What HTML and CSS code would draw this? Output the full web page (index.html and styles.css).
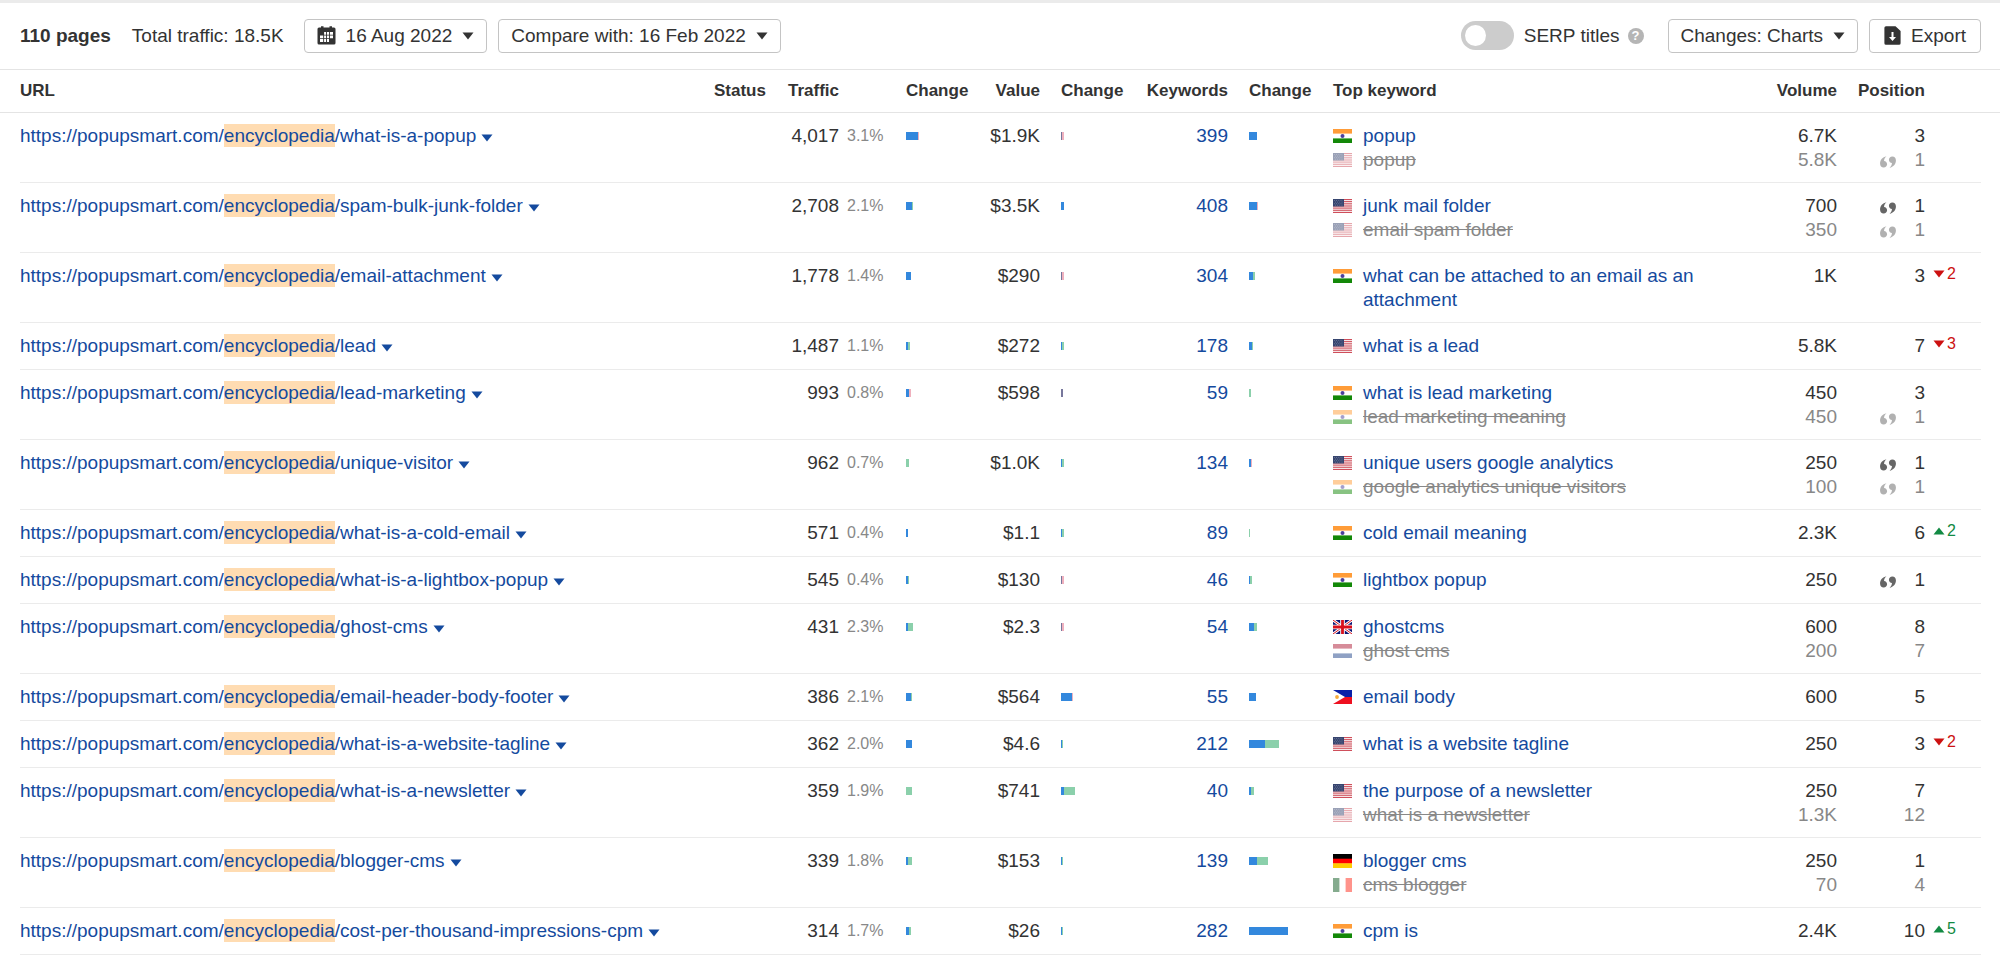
FILE: index.html
```html
<!DOCTYPE html>
<html lang="en">
<head>
<meta charset="utf-8">
<title>Top pages</title>
<link rel="stylesheet" href="styles.css">
</head>
<body>
<svg class="sprite" aria-hidden="true">
  <symbol id="in" viewBox="0 0 19 14"><path fill="#fff" d="M0 0h19v14H0z"/><path fill="#ff9c38" d="M0 0h19v4.6H0z"/><path fill="#138808" d="M0 9.4h19V14H0z"/><circle cx="9.5" cy="7" r="2" fill="#4a3f9c"/></symbol>
  <symbol id="us" viewBox="0 0 19 14"><path fill="#f6e4e6" d="M0 0h19v14H0z"/><path stroke="#cf4f5b" d="M0 .5h19M0 2.6h19M0 4.8h19M0 7h19M0 9.1h19M0 11.3h19M0 13.5h19"/><path fill="#37456f" d="M0 0h11v7.5H0z"/><path stroke="#8590ad" stroke-width=".7" stroke-dasharray=".8 1.4" d="M1 1.5h9M2 3.1h8M1 4.7h9M2 6.2h8"/></symbol>
  <symbol id="gb" viewBox="0 0 19 14"><path fill="#0a1473" d="M0 0h19v14H0z"/><path stroke="#fff" stroke-width="2.8" d="M0 0l19 14M19 0L0 14"/><path stroke="#d8101c" stroke-width="1" d="M0 0l19 14M19 0L0 14"/><path stroke="#fff" stroke-width="4.6" d="M9.5 0v14M0 7h19"/><path stroke="#d8101c" stroke-width="2.8" d="M9.5 0v14M0 7h19"/></symbol>
  <symbol id="nl" viewBox="0 0 19 14"><path fill="#fff" d="M0 0h19v14H0z"/><path fill="#ae1c36" d="M0 0h19v4.6H0z"/><path fill="#21468b" d="M0 9.4h19V14H0z"/></symbol>
  <symbol id="ph" viewBox="0 0 19 14"><path fill="#0a20a8" d="M0 0h19v7H0z"/><path fill="#ee1020" d="M0 7h19v7H0z"/><path fill="#fff" d="M0 0l12 7L0 14z"/><circle cx="4" cy="7" r="1.9" fill="#f7ac3c"/></symbol>
  <symbol id="de" viewBox="0 0 19 14"><path d="M0 0h19v5H0z"/><path fill="#f00" d="M0 4.7h19v5H0z"/><path fill="#fc0" d="M0 9.3h19V14H0z"/></symbol>
  <symbol id="it" viewBox="0 0 19 14"><path fill="#fff" d="M0 0h19v14H0z"/><path fill="#0e5a20" d="M0 0h6.4v14H0z"/><path fill="#ff2a1a" d="M12.6 0H19v14h-6.4z"/></symbol>
  <symbol id="dn" viewBox="0 0 12 8"><path fill="currentColor" d="M.5.5h11L6 7.5z"/></symbol>
  <symbol id="up" viewBox="0 0 12 8"><path fill="currentColor" d="M.5 7.500h11L6 .5z"/></symbol>
  <symbol id="quote" viewBox="0 0 18 13"><path fill="currentColor" d="M7.300.3C3.200 1.200.4 4.300.4 8.200c0 2.600 1.600 4.300 3.900 4.300 2.100 0 3.700-1.500 3.700-3.500 0-2.100-1.400-3.500-3.300-3.500C4.900 3.300 5.700 1.600 7.300.3z"/><path fill="currentColor" d="M10.700 12.700c4.100-.9 6.900-4 6.900-7.900C17.600 2.200 16 .5 13.700.5 11.600.5 10 2 10 4c0 2.100 1.400 3.500 3.300 3.500-.2 2.200-1 3.900-2.600 5.200z"/></symbol>
</svg>

<header class="toolbar">
  <strong class="count">110 pages</strong>
  <span class="total">Total traffic: 18.5K</span>
  <button class="btn date" type="button">
    <svg class="cal" viewBox="0 0 19 19" aria-hidden="true"><path fill="#333" d="M3 1.500h1V.3h2.500v1.200h6V.3H15v1.200h2A1.500 1.500 0 0 1 18.500 3v14a1.500 1.500 0 0 1-1.500 1.500H2A1.500 1.500 0 0 1 .5 17V3A1.500 1.500 0 0 1 2 1.500z"/><path fill="#fff" d="M3 6h13v10H3z"/><path fill="#333" d="M6.200 6h.9v10h-.9zM9.100 6h.9v10h-.9zM12 6h.9v10H12zM3 8.700h13v.9H3zM3 12.200h13v.9H3zM3 6h3.200v2.700H3zM12.900 13.100H16V16h-3.100z"/></svg>
    <span>16 Aug 2022</span><svg class="caret" aria-hidden="true"><use href="#dn"/></svg>
  </button>
  <button class="btn" type="button"><span>Compare with: 16 Feb 2022</span><svg class="caret" aria-hidden="true"><use href="#dn"/></svg></button>
  <div class="tools">
    <label class="switch"><input type="checkbox" role="switch"><span>SERP titles</span></label>
    <button class="help" type="button" aria-label="Help">?</button>
    <button class="btn" type="button"><span>Changes: Charts</span><svg class="caret" aria-hidden="true"><use href="#dn"/></svg></button>
    <button class="btn export" type="button">
      <svg class="file" viewBox="0 0 17 19" aria-hidden="true"><path fill="#333" d="M2 .2h9.500L16.600 5v12.200a1.600 1.600 0 0 1-1.600 1.600H2A1.600 1.600 0 0 1 .4 17.200V1.800A1.600 1.600 0 0 1 2 .2z"/><path fill="#fff" d="M7.500 6h2v5H12l-3.500 4L5 11h2.500z"/></svg>
      <span>Export</span>
    </button>
  </div>
</header>

<table class="pages">
  <colgroup><col><col class="c-status"><col class="c-traffic"><col class="c-share"><col class="c-change"><col class="c-value"><col class="c-change2"><col class="c-kw"><col class="c-change2"><col class="c-top"><col class="c-volume"><col class="c-pos"><col class="c-delta"></colgroup>
  <thead>
    <tr><th>URL</th><th>Status</th><th class="num">Traffic</th><th></th><th>Change</th><th class="num">Value</th><th class="gap">Change</th><th class="num">Keywords</th><th class="gap">Change</th><th>Top keyword</th><th class="num">Volume</th><th class="num">Position</th><th></th></tr>
  </thead>
  <tbody>
    <tr>
      <td><a href="#">https://popupsmart.com/<mark>encyclopedia</mark>/what-is-a-popup<svg><use href="#dn"/></svg></a></td><td></td>
      <td class="num">4,017</td><td class="share">3.1%</td><td><div class="bar"><i style="width:12px"></i><i class="lost" style="width:1px"></i></div></td>
      <td class="num">$1.9K</td><td class="gap"><div class="bar"><i class="dim" style="width:1px"></i><i class="lost" style="width:2px"></i></div></td>
      <td class="num"><a href="#">399</a></td><td class="gap"><div class="bar"><i style="width:8px"></i></div></td>
      <td><div class="key"><svg><use href="#in"/></svg><a href="#">popup</a></div><div class="key old"><svg><use href="#us"/></svg><s>popup</s></div></td>
      <td class="num">6.7K<div class="old">5.8K</div></td>
      <td class="num">3<div class="old"><svg class="quote"><use href="#quote"/></svg>1</div></td><td></td>
    </tr>
    <tr>
      <td><a href="#">https://popupsmart.com/<mark>encyclopedia</mark>/spam-bulk-junk-folder<svg><use href="#dn"/></svg></a></td><td></td>
      <td class="num">2,708</td><td class="share">2.1%</td><td><div class="bar"><i style="width:6px"></i><i class="gain" style="width:1px"></i></div></td>
      <td class="num">$3.5K</td><td class="gap"><div class="bar"><i style="width:3px"></i></div></td>
      <td class="num"><a href="#">408</a></td><td class="gap"><div class="bar"><i style="width:8px"></i><i class="lost" style="width:1px"></i></div></td>
      <td><div class="key"><svg><use href="#us"/></svg><a href="#">junk mail folder</a></div><div class="key old"><svg><use href="#us"/></svg><s>email spam folder</s></div></td>
      <td class="num">700<div class="old">350</div></td>
      <td class="num"><svg class="quote"><use href="#quote"/></svg>1<div class="old"><svg class="quote"><use href="#quote"/></svg>1</div></td><td></td>
    </tr>
    <tr>
      <td><a href="#">https://popupsmart.com/<mark>encyclopedia</mark>/email-attachment<svg><use href="#dn"/></svg></a></td><td></td>
      <td class="num">1,778</td><td class="share">1.4%</td><td><div class="bar"><i style="width:5px"></i></div></td>
      <td class="num">$290</td><td class="gap"><div class="bar"><i class="dim" style="width:1px"></i><i class="lost" style="width:2px"></i></div></td>
      <td class="num"><a href="#">304</a></td><td class="gap"><div class="bar"><i style="width:4px"></i><i class="gain" style="width:2px"></i></div></td>
      <td><div class="key"><svg><use href="#in"/></svg><a href="#">what can be attached to an email as an attachment</a></div></td>
      <td class="num">1K</td>
      <td class="num">3</td><td><div class="delta down"><svg><use href="#dn"/></svg>2</div></td>
    </tr>
    <tr>
      <td><a href="#">https://popupsmart.com/<mark>encyclopedia</mark>/lead<svg><use href="#dn"/></svg></a></td><td></td>
      <td class="num">1,487</td><td class="share">1.1%</td><td><div class="bar"><i style="width:2px"></i><i class="gain" style="width:2px"></i></div></td>
      <td class="num">$272</td><td class="gap"><div class="bar"><i style="width:1px"></i><i class="gain" style="width:2px"></i></div></td>
      <td class="num"><a href="#">178</a></td><td class="gap"><div class="bar"><i style="width:3px"></i><i class="gain" style="width:1px"></i></div></td>
      <td><div class="key"><svg><use href="#us"/></svg><a href="#">what is a lead</a></div></td>
      <td class="num">5.8K</td>
      <td class="num">7</td><td><div class="delta down"><svg><use href="#dn"/></svg>3</div></td>
    </tr>
    <tr>
      <td><a href="#">https://popupsmart.com/<mark>encyclopedia</mark>/lead-marketing<svg><use href="#dn"/></svg></a></td><td></td>
      <td class="num">993</td><td class="share">0.8%</td><td><div class="bar"><i style="width:3px"></i><i class="lost" style="width:2px"></i></div></td>
      <td class="num">$598</td><td class="gap"><div class="bar"><i class="dim" style="width:2px"></i></div></td>
      <td class="num"><a href="#">59</a></td><td class="gap"><div class="bar"><i class="gain" style="width:2px"></i></div></td>
      <td><div class="key"><svg><use href="#in"/></svg><a href="#">what is lead marketing</a></div><div class="key old"><svg><use href="#in"/></svg><s>lead marketing meaning</s></div></td>
      <td class="num">450<div class="old">450</div></td>
      <td class="num">3<div class="old"><svg class="quote"><use href="#quote"/></svg>1</div></td><td></td>
    </tr>
    <tr>
      <td><a href="#">https://popupsmart.com/<mark>encyclopedia</mark>/unique-visitor<svg><use href="#dn"/></svg></a></td><td></td>
      <td class="num">962</td><td class="share">0.7%</td><td><div class="bar"><i class="gain" style="width:3px"></i></div></td>
      <td class="num">$1.0K</td><td class="gap"><div class="bar"><i style="width:1px"></i><i class="gain" style="width:2px"></i></div></td>
      <td class="num"><a href="#">134</a></td><td class="gap"><div class="bar"><i style="width:2px"></i><i class="lost" style="width:1px"></i></div></td>
      <td><div class="key"><svg><use href="#us"/></svg><a href="#">unique users google analytics</a></div><div class="key old"><svg><use href="#in"/></svg><s>google analytics unique visitors</s></div></td>
      <td class="num">250<div class="old">100</div></td>
      <td class="num"><svg class="quote"><use href="#quote"/></svg>1<div class="old"><svg class="quote"><use href="#quote"/></svg>1</div></td><td></td>
    </tr>
    <tr>
      <td><a href="#">https://popupsmart.com/<mark>encyclopedia</mark>/what-is-a-cold-email<svg><use href="#dn"/></svg></a></td><td></td>
      <td class="num">571</td><td class="share">0.4%</td><td><div class="bar"><i style="width:2px"></i></div></td>
      <td class="num">$1.1</td><td class="gap"><div class="bar"><i style="width:1px"></i><i class="gain" style="width:2px"></i></div></td>
      <td class="num"><a href="#">89</a></td><td class="gap"><div class="bar"><i class="gain" style="width:1px"></i></div></td>
      <td><div class="key"><svg><use href="#in"/></svg><a href="#">cold email meaning</a></div></td>
      <td class="num">2.3K</td>
      <td class="num">6</td><td><div class="delta rise"><svg><use href="#up"/></svg>2</div></td>
    </tr>
    <tr>
      <td><a href="#">https://popupsmart.com/<mark>encyclopedia</mark>/what-is-a-lightbox-popup<svg><use href="#dn"/></svg></a></td><td></td>
      <td class="num">545</td><td class="share">0.4%</td><td><div class="bar"><i style="width:2px"></i><i class="gain" style="width:1px"></i></div></td>
      <td class="num">$130</td><td class="gap"><div class="bar"><i class="dim" style="width:1px"></i><i class="lost" style="width:2px"></i></div></td>
      <td class="num"><a href="#">46</a></td><td class="gap"><div class="bar"><i style="width:1px"></i><i class="gain" style="width:2px"></i></div></td>
      <td><div class="key"><svg><use href="#in"/></svg><a href="#">lightbox popup</a></div></td>
      <td class="num">250</td>
      <td class="num"><svg class="quote"><use href="#quote"/></svg>1</td><td></td>
    </tr>
    <tr>
      <td><a href="#">https://popupsmart.com/<mark>encyclopedia</mark>/ghost-cms<svg><use href="#dn"/></svg></a></td><td></td>
      <td class="num">431</td><td class="share">2.3%</td><td><div class="bar"><i style="width:2px"></i><i class="gain" style="width:5px"></i></div></td>
      <td class="num">$2.3</td><td class="gap"><div class="bar"><i class="dim" style="width:1px"></i><i class="lost" style="width:2px"></i></div></td>
      <td class="num"><a href="#">54</a></td><td class="gap"><div class="bar"><i style="width:5px"></i><i class="gain" style="width:3px"></i></div></td>
      <td><div class="key"><svg><use href="#gb"/></svg><a href="#">ghostcms</a></div><div class="key old"><svg><use href="#nl"/></svg><s>ghost cms</s></div></td>
      <td class="num">600<div class="old">200</div></td>
      <td class="num">8<div class="old">7</div></td><td></td>
    </tr>
    <tr>
      <td><a href="#">https://popupsmart.com/<mark>encyclopedia</mark>/email-header-body-footer<svg><use href="#dn"/></svg></a></td><td></td>
      <td class="num">386</td><td class="share">2.1%</td><td><div class="bar"><i style="width:5px"></i><i class="gain" style="width:1px"></i></div></td>
      <td class="num">$564</td><td class="gap"><div class="bar"><i style="width:11px"></i><i class="lost" style="width:1px"></i></div></td>
      <td class="num"><a href="#">55</a></td><td class="gap"><div class="bar"><i style="width:7px"></i></div></td>
      <td><div class="key"><svg><use href="#ph"/></svg><a href="#">email body</a></div></td>
      <td class="num">600</td>
      <td class="num">5</td><td></td>
    </tr>
    <tr>
      <td><a href="#">https://popupsmart.com/<mark>encyclopedia</mark>/what-is-a-website-tagline<svg><use href="#dn"/></svg></a></td><td></td>
      <td class="num">362</td><td class="share">2.0%</td><td><div class="bar"><i style="width:6px"></i></div></td>
      <td class="num">$4.6</td><td class="gap"><div class="bar"><i style="width:1px"></i><i class="gain" style="width:1px"></i></div></td>
      <td class="num"><a href="#">212</a></td><td class="gap"><div class="bar"><i style="width:16px"></i><i class="gain" style="width:14px"></i></div></td>
      <td><div class="key"><svg><use href="#us"/></svg><a href="#">what is a website tagline</a></div></td>
      <td class="num">250</td>
      <td class="num">3</td><td><div class="delta down"><svg><use href="#dn"/></svg>2</div></td>
    </tr>
    <tr>
      <td><a href="#">https://popupsmart.com/<mark>encyclopedia</mark>/what-is-a-newsletter<svg><use href="#dn"/></svg></a></td><td></td>
      <td class="num">359</td><td class="share">1.9%</td><td><div class="bar"><i class="gain" style="width:6px"></i></div></td>
      <td class="num">$741</td><td class="gap"><div class="bar"><i style="width:3px"></i><i class="gain" style="width:11px"></i></div></td>
      <td class="num"><a href="#">40</a></td><td class="gap"><div class="bar"><i style="width:2px"></i><i class="gain" style="width:3px"></i></div></td>
      <td><div class="key"><svg><use href="#us"/></svg><a href="#">the purpose of a newsletter</a></div><div class="key old"><svg><use href="#us"/></svg><s>what is a newsletter</s></div></td>
      <td class="num">250<div class="old">1.3K</div></td>
      <td class="num">7<div class="old">12</div></td><td></td>
    </tr>
    <tr>
      <td><a href="#">https://popupsmart.com/<mark>encyclopedia</mark>/blogger-cms<svg><use href="#dn"/></svg></a></td><td></td>
      <td class="num">339</td><td class="share">1.8%</td><td><div class="bar"><i style="width:2px"></i><i class="gain" style="width:4px"></i></div></td>
      <td class="num">$153</td><td class="gap"><div class="bar"><i style="width:1px"></i><i class="gain" style="width:1px"></i></div></td>
      <td class="num"><a href="#">139</a></td><td class="gap"><div class="bar"><i style="width:8px"></i><i class="gain" style="width:11px"></i></div></td>
      <td><div class="key"><svg><use href="#de"/></svg><a href="#">blogger cms</a></div><div class="key old"><svg><use href="#it"/></svg><s>cms blogger</s></div></td>
      <td class="num">250<div class="old">70</div></td>
      <td class="num">1<div class="old">4</div></td><td></td>
    </tr>
    <tr>
      <td><a href="#">https://popupsmart.com/<mark>encyclopedia</mark>/cost-per-thousand-impressions-cpm<svg><use href="#dn"/></svg></a></td><td></td>
      <td class="num">314</td><td class="share">1.7%</td><td><div class="bar"><i style="width:3px"></i><i class="gain" style="width:2px"></i></div></td>
      <td class="num">$26</td><td class="gap"><div class="bar"><i style="width:1px"></i><i class="gain" style="width:1px"></i></div></td>
      <td class="num"><a href="#">282</a></td><td class="gap"><div class="bar"><i style="width:39px"></i></div></td>
      <td><div class="key"><svg><use href="#in"/></svg><a href="#">cpm is</a></div></td>
      <td class="num">2.4K</td>
      <td class="num">10</td><td><div class="delta rise"><svg><use href="#up"/></svg>5</div></td>
    </tr>
  </tbody>
</table>
</body>
</html>
```
FILE: styles.css
```css
* {
  box-sizing: border-box;
}

body {
  margin: 0;
  border-top: 3px solid #ebebeb;
  background: #fff;
  color: #333;
  font: 19px/24px "Liberation Sans", Arial, sans-serif;
}

.sprite {
  display: none;
}

a {
  color: #144a9e;
  text-decoration: none;
}

/* Toolbar */

.toolbar {
  display: flex;
  align-items: center;
  height: 67px;
  padding: 0 19px 1px 20px;
  border-bottom: 1px solid #e4e4e4;
  white-space: nowrap;
}

.count {
  margin-right: 21px;
}

.total {
  margin-right: 20px;
}

.btn {
  display: flex;
  align-items: center;
  gap: 10px;
  height: 34px;
  margin-right: 11px;
  padding: 0 12px;
  border: 1px solid #c4c4c4;
  border-radius: 4px;
  background: #fff;
  color: #333;
  font: inherit;
}

.caret {
  width: 12px;
  height: 8px;
}

.cal {
  width: 19px;
  height: 19px;
}

.tools {
  display: flex;
  align-items: center;
  margin-left: auto;
}

.switch {
  display: flex;
  align-items: center;
  gap: 10px;
}

.switch input {
  appearance: none;
  display: flex;
  align-items: center;
  width: 53px;
  height: 29px;
  margin: 0;
  padding: 0 4px;
  border-radius: 15px;
  background: #ccc;
}

.switch input::before {
  content: "";
  width: 21px;
  height: 21px;
  border-radius: 50%;
  background: #fff;
}

.switch input:checked {
  justify-content: flex-end;
  background: #3388dd;
}

.help {
  width: 16px;
  height: 16px;
  margin: 0 24px 0 8px;
  padding: 0;
  border: 0;
  border-radius: 50%;
  background: #b5b5b5;
  color: #fff;
  font: bold 13px/16px "Liberation Sans", Arial, sans-serif;
}

.export {
  margin-right: 0;
  padding: 0 14px;
}

.file {
  width: 17px;
  height: 19px;
}

/* Table */

.pages {
  width: 100%;
  border-spacing: 0;
  table-layout: fixed;
}

.c-status { width: 74px; }
.c-traffic { width: 51px; }
.c-share { width: 67px; }
.c-change { width: 74px; }
.c-value { width: 60px; }
.c-change2 { width: 105px; }
.c-kw { width: 83px; }
.c-top { width: 400px; }
.c-volume { width: 104px; }
.c-pos { width: 88px; }
.c-delta { width: 75px; }

th {
  height: 43px;
  padding: 0;
  border-bottom: 1px solid #e4e4e4;
  font-size: 17px;
  text-align: left;
  white-space: nowrap;
}

td {
  height: 47px;
  padding: 11px 0;
  background: linear-gradient(#ebebeb, #ebebeb) 0 100% / 100% 1px no-repeat;
  vertical-align: top;
}

th:first-child,
td:first-child {
  padding-left: 20px;
}

td:first-child {
  background-position: 20px 100%;
  white-space: nowrap;
}

td:last-child {
  padding-left: 8px;
  background-size: calc(100% - 19px) 1px;
}

th.num,
td.num {
  text-align: right;
}

.gap {
  padding-left: 21px;
}

td:first-child svg {
  width: 12px;
  height: 8px;
  margin-left: 5px;
}

mark {
  padding: 1px 0;
  background: #ffdcb2;
  color: inherit;
}

td.share {
  padding-left: 8px;
  color: #888;
  font-size: 16px;
}

.bar {
  display: flex;
  align-items: center;
  height: 24px;
}

.bar i {
  height: 8px;
  background: #3388dd;
}

.bar .gain { background: #8bd0ab; }
.bar .lost { background: #efb0bd; }
.bar .dim { background: #77779c; }

.key {
  display: flex;
}

.key svg {
  flex: none;
  width: 19px;
  height: 14px;
  margin: 5px 11px 5px 0;
}

.old {
  color: #888;
}

.old svg {
  opacity: 0.5;
}

.quote {
  width: 18px;
  height: 12px;
  margin-right: 17px;
  color: #666;
  vertical-align: -2px;
}

.delta {
  display: flex;
  align-items: center;
  gap: 2px;
  font-size: 16px;
  line-height: 20px;
}

.delta svg {
  width: 12px;
  height: 8px;
}

.down { color: #cc1111; }
.rise { color: #128a43; }
```
